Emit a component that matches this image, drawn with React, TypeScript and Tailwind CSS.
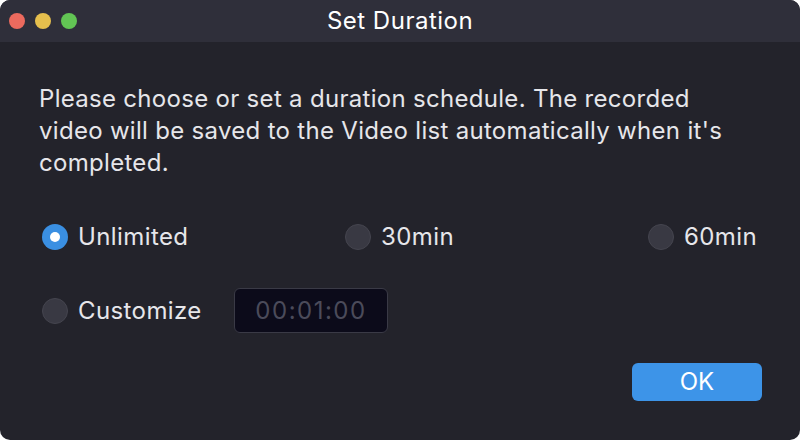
const Radio = ({ checked, label }: { checked?: boolean; label: string }) => (
  <div className="flex items-center gap-[10px]">
    {checked ? (
      <div className="w-[26px] h-[26px] rounded-full bg-[#3a8fe2] flex items-center justify-center">
        <div className="w-[10px] h-[10px] rounded-full bg-white" />
      </div>
    ) : (
      <div className="w-[26px] h-[26px] rounded-full bg-[#393943] border border-[#45454f]" />
    )}
    <span className="text-[24px] leading-[30px] tracking-[0.4px] text-[#e6e6ea]">{label}</span>
  </div>
);

export default function App() {
  return (
    <div className="w-[800px] h-[440px] bg-white font-['Inter','Liberation_Sans',sans-serif]">
      <div className="w-full h-full rounded-[10px] overflow-hidden bg-[#23232b] flex flex-col">
        {/* title bar */}
        <div className="h-[42px] bg-[#2f2f3a] relative flex items-center justify-center">
          <div className="absolute left-[9px] top-[13px] flex gap-[10px]">
            <div className="w-[16px] h-[16px] rounded-full bg-[#ec6a5e]" />
            <div className="w-[16px] h-[16px] rounded-full bg-[#e6bf4d]" />
            <div className="w-[16px] h-[16px] rounded-full bg-[#62c554]" />
          </div>
          <span className="text-[24px] leading-[30px] tracking-[0.5px] text-white">Set Duration</span>
        </div>

        <div className="flex flex-col px-[39px] pt-[41px]">
          <p className="text-[24px] leading-[32px] tracking-[0.3px] text-[#e6e6ea]">
            Please choose or set a duration schedule. The recorded
            <br />
            video will be saved to the Video list automatically when it's completed.
          </p>

          <div className="flex items-center mt-[43px] pl-[3px] pr-[4px]">
            <div className="w-[303px]">
              <Radio checked label="Unlimited" />
            </div>
            <Radio label="30min" />
            <div className="ml-auto">
              <Radio label="60min" />
            </div>
          </div>

          <div className="flex items-center mt-[36px] pl-[3px]">
            <div className="w-[192px]">
              <Radio label="Customize" />
            </div>
            <div className="w-[154px] h-[45px] rounded-[6px] bg-[#0c0b1a] border border-[#3a3a46] flex items-center justify-center">
              <span className="text-[24px] tracking-[1.5px] text-[#4b4b5a]">00:01:00</span>
            </div>
          </div>

          <div className="flex justify-end mt-[30px]">
            <button className="w-[130px] h-[38px] rounded-[6px] bg-[#3d94e8] text-white text-[24px] leading-[30px] mr-[-1px]">
              OK
            </button>
          </div>
        </div>
      </div>
    </div>
  );
}
